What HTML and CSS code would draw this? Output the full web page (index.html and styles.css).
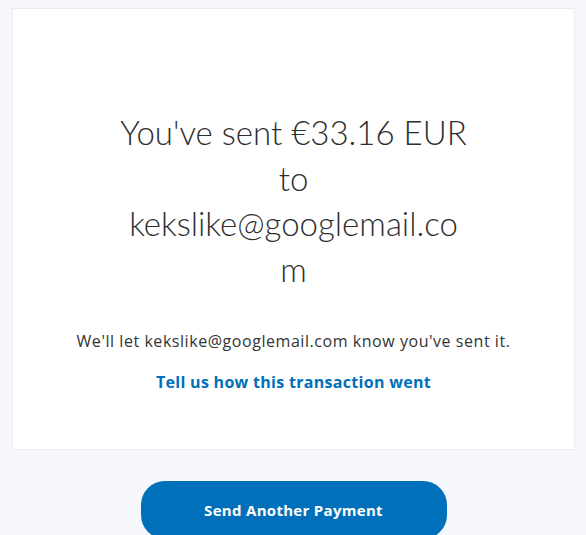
FILE: index.html
```html
<!DOCTYPE html>
<html lang="en">
<head>
<meta charset="utf-8">
<title>Payment sent</title>
<link rel="stylesheet" href="styles.css">
</head>
<body>
<main class="page">
  <section class="card">
    <h1 class="title">You've sent €33.16 EUR to kekslike@googlemail.com</h1>
    <p class="note">We'll let kekslike@googlemail.com know you've sent it.</p>
    <a class="feedback" href="#">Tell us how this transaction went</a>
  </section>
  <div class="actions">
    <a class="btn-primary" href="#">Send Another Payment</a>
  </div>
</main>
</body>
</html>
```

FILE: styles.css
```css
* { box-sizing: border-box; }
html, body { margin: 0; padding: 0; }
body {
  background: #f5f7fa;
  font-family: "Open Sans", "Noto Sans", sans-serif;
  color: #2c2e2f;
}
.page {
  padding: 8px 11px 0 12px;
  display: flex;
  flex-direction: column;
  align-items: stretch;
}
.card {
  background: #ffffff;
  border: 1px solid #eaeced;
  padding: 101px 20px 55px;
  display: flex;
  flex-direction: column;
  align-items: center;
  text-align: center;
}
.title {
  margin: 0;
  width: 350px;
  font-family: "Lato", "Open Sans", sans-serif;
  font-weight: 300;
  font-size: 33px;
  line-height: 45.5px;
  overflow-wrap: break-word;
  color: #2c2e2f;
}
.note {
  margin: 37px 0 0;
  font-size: 16px;
  line-height: 24px;
  letter-spacing: 0.55px;
  color: #333435;
}
.feedback {
  margin-top: 17px;
  font-size: 16px;
  line-height: 24px;
  letter-spacing: 0.3px;
  font-weight: 700;
  color: #0070ba;
  text-decoration: none;
}
.actions {
  display: flex;
  justify-content: center;
  padding-top: 31px;
}
.btn-primary {
  width: 306px;
  height: 58px;
  border-radius: 24px;
  background: #0070ba;
  color: #ffffff;
  font-weight: 700;
  font-size: 15px;
  letter-spacing: 0.3px;
  text-decoration: none;
  display: flex;
  align-items: center;
  justify-content: center;
}
```
